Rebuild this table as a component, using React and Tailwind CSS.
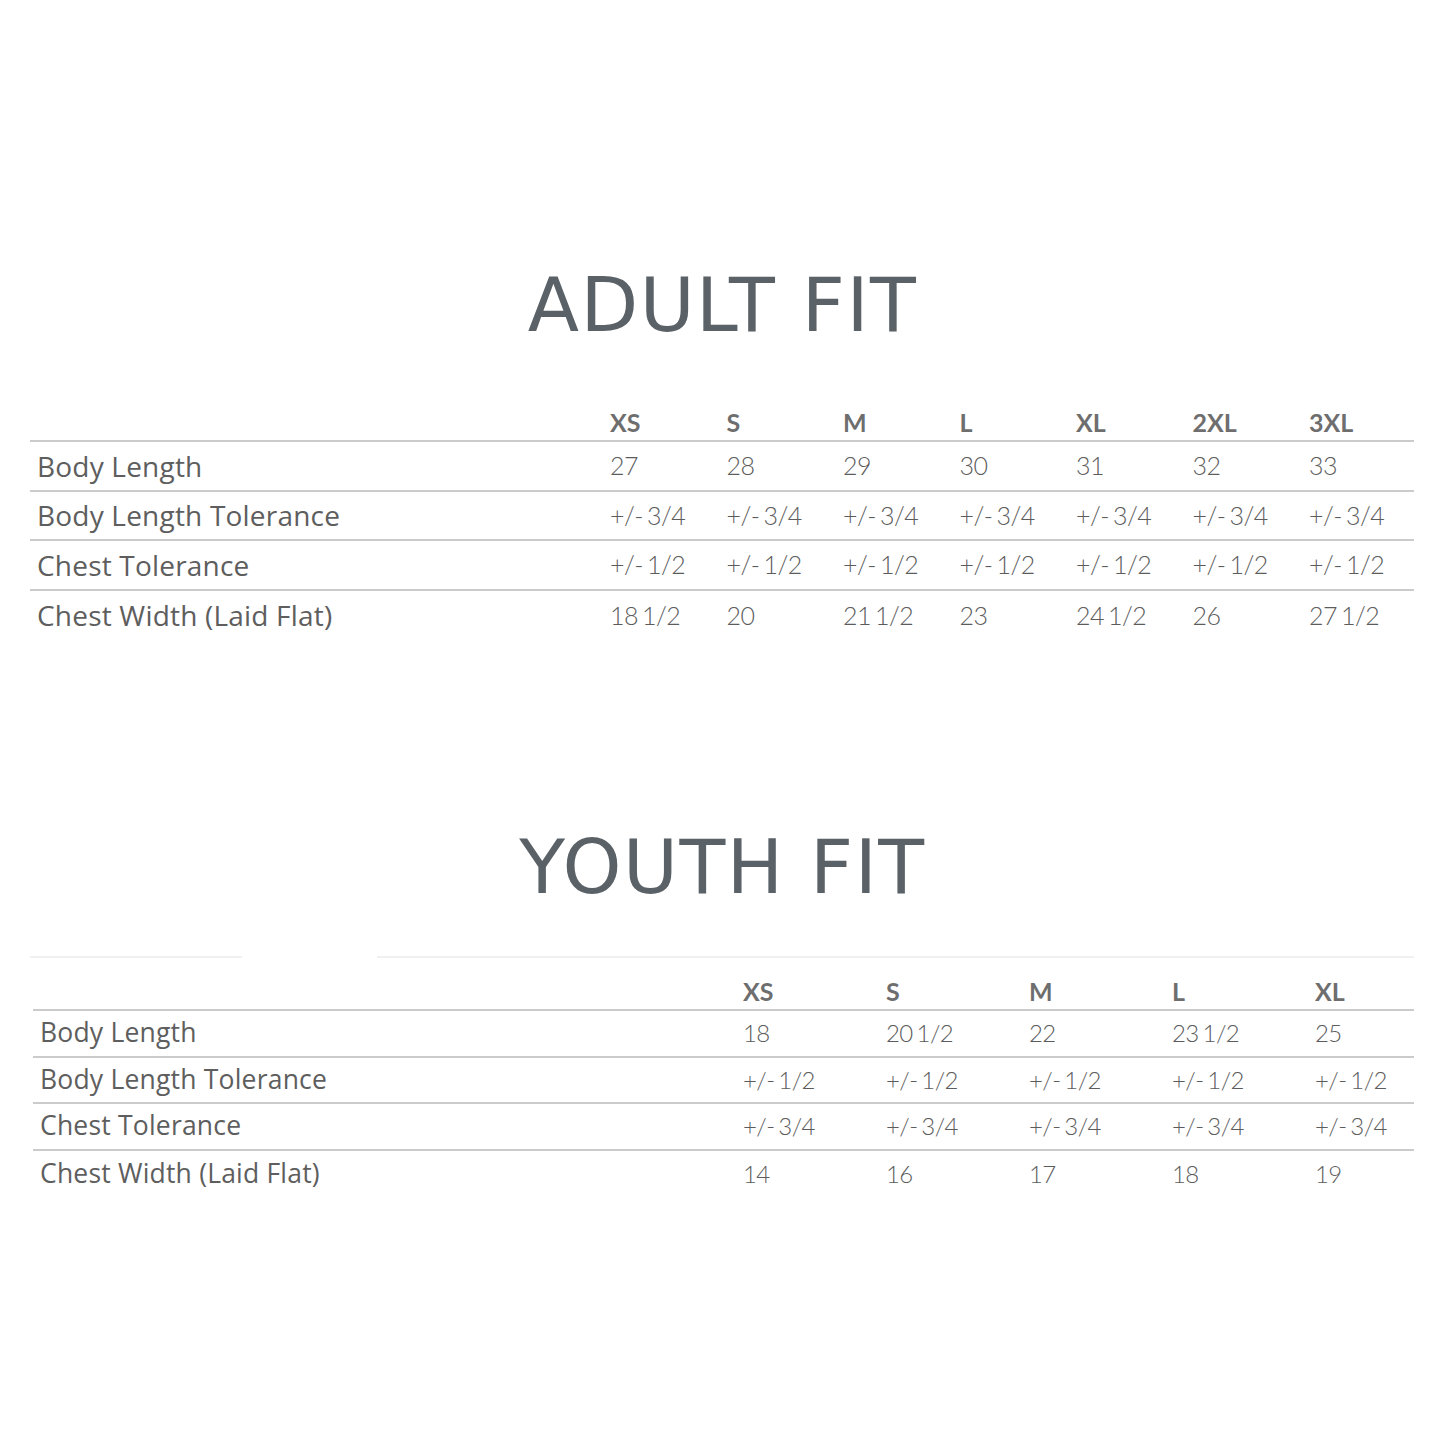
import React from "react";

const adultSizes = ["XS", "S", "M", "L", "XL", "2XL", "3XL"];
const adultRows = [
  ["Body Length", ["27", "28", "29", "30", "31", "32", "33"]],
  ["Body Length Tolerance", Array(7).fill("+/- 3/4")],
  ["Chest Tolerance", Array(7).fill("+/- 1/2")],
  ["Chest Width (Laid Flat)", ["18 1/2", "20", "21 1/2", "23", "24 1/2", "26", "27 1/2"]],
];
const youthSizes = ["XS", "S", "M", "L", "XL"];
const youthRows = [
  ["Body Length", ["18", "20 1/2", "22", "23 1/2", "25"]],
  ["Body Length Tolerance", Array(5).fill("+/- 1/2")],
  ["Chest Tolerance", Array(5).fill("+/- 3/4")],
  ["Chest Width (Laid Flat)", ["14", "16", "17", "18", "19"]],
];

const labelFont = { fontFamily: '"Open Sans", sans-serif' };
const numFont = { fontFamily: 'Lato, sans-serif' };
const titleFont = { fontFamily: '"DejaVu Sans", sans-serif' };

export default function App() {
  return (
    <div className="w-[1445px] h-[1445px] bg-white relative overflow-hidden">
      <div className="pt-[265px]">
        <h1 className="text-center text-[75px] leading-[80px] font-medium tracking-[1.5px] text-[#5a6268]" style={titleFont}>
          ADULT FIT
        </h1>
        <div className="mt-[59px] ml-[30px] w-[1384px]">
          <div className="flex h-[38px] items-center border-b-2 border-[#cbcbcb]">
            <div className="w-[573px] shrink-0" />
            {adultSizes.map((s) => (
              <div key={s} className="w-[116.5px] shrink-0 pl-[7px] pt-[2px] text-[25px] font-bold text-[#6e6e6e]" style={numFont}>{s}</div>
            ))}
          </div>
          {adultRows.map(([label, vals], i) => (
            <div key={label} className={"flex h-[49.5px] items-center " + (i < 3 ? "border-b-2 border-[#cbcbcb]" : "")}>
              <div className="w-[573px] shrink-0 pl-[7px] text-[28px] tracking-[0.2px] text-[#5e5e5e]" style={labelFont}>{label}</div>
              {vals.map((v, j) => (
                <div key={j} className="w-[116.5px] shrink-0 pl-[7px] text-[25px] font-light tracking-[-0.6px] text-[#5c5c5c] [word-spacing:-2px]" style={numFont}>{v}</div>
              ))}
            </div>
          ))}
        </div>

        <h1 className="mt-[187px] text-center text-[75px] leading-[80px] font-medium tracking-[1.5px] text-[#5a6268]" style={titleFont}>
          YOUTH FIT
        </h1>
        <div className="mt-[49px] ml-[30px] w-[1384px] flex">
          <div className="w-[212px] border-b-2 border-[#f0f0f0]" />
          <div className="w-[135px]" />
          <div className="flex-1 border-b-2 border-[#f0f0f0]" />
        </div>
        <div className="mt-[15px] ml-[33px] w-[1381px]">
          <div className="flex h-[38px] items-center border-b-2 border-[#cbcbcb]">
            <div className="w-[703px] shrink-0" />
            {youthSizes.map((s, j) => (
              <div key={s} className={(j < 4 ? "w-[143px] shrink-0 " : "flex-1 ") + "pl-[7px] pt-[2px] text-[25px] font-bold text-[#6e6e6e]"} style={numFont}>{s}</div>
            ))}
          </div>
          {youthRows.map(([label, vals], i) => (
            <div key={label} className={"flex h-[46.5px] items-center " + (i < 3 ? "border-b-2 border-[#cbcbcb]" : "")}>
              <div className="w-[703px] shrink-0 pl-[7px] text-[26.5px] tracking-[0.2px] text-[#5e5e5e]" style={labelFont}>{label}</div>
              {vals.map((v, j) => (
                <div key={j} className={(j < 4 ? "w-[143px] shrink-0 " : "flex-1 ") + "pl-[7px] text-[24px] font-light tracking-[-0.6px] text-[#5c5c5c] [word-spacing:-2px]"} style={numFont}>{v}</div>
              ))}
            </div>
          ))}
        </div>
      </div>
    </div>
  );
}
